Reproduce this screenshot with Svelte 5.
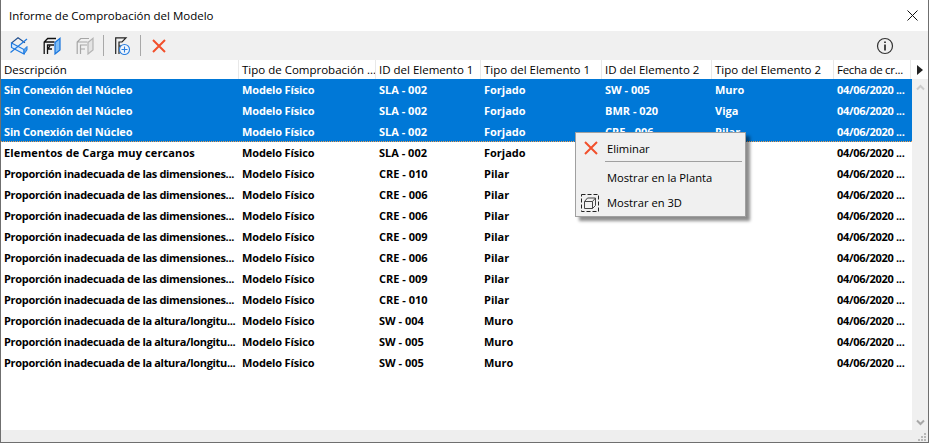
<script>
  const columns = ['Descripción', 'Tipo de Comprobación ...', 'ID del Elemento 1', 'Tipo del Elemento 1', 'ID del Elemento 2', 'Tipo del Elemento 2', 'Fecha de cr...'];
  const dims = 'Proporción inadecuada de las dimensiones...';
  const alt = 'Proporción inadecuada de la altura/longitu...';
  const nucleo = 'Sin Conexión del Núcleo';
  const rows = [
    [nucleo, 'SLA - 002', 'Forjado', 'SW - 005', 'Muro', true],
    [nucleo, 'SLA - 002', 'Forjado', 'BMR - 020', 'Viga', true],
    [nucleo, 'SLA - 002', 'Forjado', 'CRE - 006', 'Pilar', true],
    ['Elementos de Carga muy cercanos', 'SLA - 002', 'Forjado', '', ''],
    [dims, 'CRE - 010', 'Pilar', '', ''],
    [dims, 'CRE - 006', 'Pilar', '', ''],
    [dims, 'CRE - 006', 'Pilar', '', ''],
    [dims, 'CRE - 009', 'Pilar', '', ''],
    [dims, 'CRE - 006', 'Pilar', '', ''],
    [dims, 'CRE - 009', 'Pilar', '', ''],
    [dims, 'CRE - 010', 'Pilar', '', ''],
    [alt, 'SW - 004', 'Muro', '', ''],
    [alt, 'SW - 005', 'Muro', '', ''],
    [alt, 'SW - 005', 'Muro', '', '']
  ];
</script>

<div class="window">
  <header class="titlebar">
    <span class="title">Informe de Comprobación del Modelo</span>
    <svg class="close" width="11" height="11" viewBox="0 0 11 11"><path d="M.5.5l10 10M10.5.5l-10 10" stroke="#111" stroke-width="1" fill="none"/></svg>
  </header>

  <div class="toolbar">
    <svg class="tool" width="18" height="18" viewBox="0 0 18 18" fill="none">
      <path d="M1.500 6L8 .8l7 5" stroke="#23508f" stroke-width="1.100"/>
      <path d="M1.500 6v4.500L14 17v-4.500z" fill="#dcebfb" stroke="#1e7ae0" stroke-width="1.200"/>
      <path d="M14 12.500l3-3V13l-3 4z" fill="#5ba8f0" stroke="#1e7ae0"/>
      <path d="M.5 15.500L17 2" stroke="#1e7ae0" stroke-width="1.200"/>
    </svg>
    <svg class="tool" width="18" height="18" viewBox="0 0 18 18" fill="none">
      <path d="M1.200 17V5l3.500-3.500H13M1.200 5H11.500M4.500 17V8H11M4.500 12l2.500-3M4.500 12H9" stroke="#111" stroke-width="1.300"/>
      <path d="M12 5.500l5-4.200V13l-5 4z" fill="#7fbdf5" stroke="#1673dc" stroke-width="1.200"/>
    </svg>
    <svg class="tool" width="18" height="18" viewBox="0 0 18 18" fill="none">
      <path d="M1.200 17V5l3.500-3.500H13M1.200 5H11.500M4.500 17V8H11M4.500 12H9" stroke="#a6a6a6" stroke-width="1.200"/>
      <path d="M12 5.500l5-4.200V13l-5 4z" fill="#e4e4e4" stroke="#b4b4b4" stroke-width="1.200"/>
    </svg>
    <span class="divider"></span>
    <svg class="tool" width="18" height="18" viewBox="0 0 18 18" fill="none">
      <path d="M1.700 17V.8H12L8 5H5v12M5 9h3" stroke="#222" stroke-width="1.200"/>
      <circle cx="10.500" cy="12.500" r="5" fill="#f0f6fd" stroke="#2a7fe0" stroke-width="1.100"/>
      <path d="M10.500 9.500v6M7.500 12.500h6" stroke="#2a7fe0" stroke-width="1.100"/>
    </svg>
    <span class="divider second"></span>
    <svg class="tool" width="14" height="14" viewBox="0 0 14 14"><path d="M1 1l12 12M13 1L1 13" stroke="#f2502c" stroke-width="2" fill="none"/></svg>
    <svg class="info" width="18" height="18" viewBox="0 0 18 18" fill="none">
      <circle cx="9" cy="9" r="7.500" stroke="#333" stroke-width="1.200"/>
      <path d="M9 7.500V13.500" stroke="#333" stroke-width="1.800"/>
      <path d="M9 4.500v1.600" stroke="#333" stroke-width="1.800"/>
    </svg>
  </div>

  <div class="content">
    <div class="main">
      <div class="grid head">
        {#each columns as col}
          <span class="cell">{col}</span>
        {/each}
      </div>
      {#each rows as row, i}
        <div class="grid row" class:selected={row[5]} class:focus={i === 2}>
          <span class="cell" class:tight={i > 3} class:snug={i < 3} class:wide={i === 3}>{row[0]}</span>
          <span class="cell snug">Modelo Físico</span>
          <span class="cell">{row[1]}</span>
          <span class="cell">{row[2]}</span>
          <span class="cell">{row[3]}</span>
          <span class="cell">{row[4]}</span>
          <span class="cell date">04/06/2020 ...</span>
        </div>
      {/each}
    </div>
    <div class="vscroll">
      <div class="corner"><svg width="6" height="10" viewBox="0 0 6 10"><path d="M0 0l6 5-6 5z" fill="#222"/></svg></div>
      <div class="track">
        <svg width="9" height="7" viewBox="0 0 9 7" fill="none"><path d="M1 5.500l3.500-3.500L8 5.500" stroke="#ccc" stroke-width="2"/></svg>
        <svg width="9" height="7" viewBox="0 0 9 7" fill="none"><path d="M1 1.500L4.500 5 8 1.500" stroke="#a8a8a8" stroke-width="2"/></svg>
      </div>
    </div>
  </div>

  <div class="hscroll">
    <svg class="grip" width="9" height="9" viewBox="0 0 9 9"><path d="M6 0h2v2H6zM3 3h2v2H3zM6 3h2v2H6zM0 6h2v2H0zM3 6h2v2H3zM6 6h2v2H6z" fill="#b8b8b8"/></svg>
  </div>

  <div class="menu">
    <div class="item">
      <svg class="micon" width="14" height="14" viewBox="0 0 14 14"><path d="M1 1l12 12M13 1L1 13" stroke="#f2502c" stroke-width="2" fill="none"/></svg>
      <span>Eliminar</span>
    </div>
    <div class="sep"></div>
    <div class="item"><span>Mostrar en la Planta</span></div>
    <div class="item">
      <svg class="micon cube" width="18" height="18" viewBox="0 0 18 18" fill="none">
        <rect x=".5" y=".5" width="17" height="17" stroke="#222" stroke-dasharray="4 2"/>
        <path d="M3.500 7.500h8v7h-8zM3.500 7.500l3-3.500h8v7.500l-3 3M11.500 7.500l3-3.500" stroke="#444"/>
      </svg>
      <span>Mostrar en 3D</span>
    </div>
  </div>
</div>

<style>
  :global(body) {
    margin: 0;
    background: #fff;
  }
  .window {
    position: relative;
    width: 929px;
    height: 443px;
    box-sizing: border-box;
    border: 1px solid #6f6f6f;
    border-top: 0;
    display: flex;
    flex-direction: column;
    background: #fff;
    color: #000;
    font-family: "Open Sans", "Noto Sans", sans-serif;
    font-size: 11.500px;
    overflow: hidden;
  }
  .titlebar {
    height: 31px;
    flex: none;
    display: flex;
    align-items: center;
    justify-content: space-between;
    padding: 0 10px 0 8px;
  }
  .title {
    font-size: 11.500px;
  }
  .toolbar {
    height: 29px;
    flex: none;
    background: #f0f0f0;
    display: flex;
    align-items: center;
    padding-left: 9px;
  }
  .tool {
    margin-right: 15px;
    flex: none;
  }
  .divider {
    width: 1px;
    height: 21px;
    background: #a8a8a8;
    margin: 0 10px 0 -6px;
  }
  .divider.second {
    margin: 0 11px 0 -7px;
  }
  .info {
    margin-left: auto;
    margin-right: 34px;
  }
  .content {
    flex: 1;
    display: flex;
    min-height: 0;
  }
  .main {
    flex: 1;
    min-width: 0;
  }
  .grid {
    display: grid;
    grid-template-columns: 238px 137px 105px 121px 110px 122px 77px;
  }
  .head {
    height: 19px;
    align-items: center;
  }
  .head .cell {
    border-right: 1px solid #e8e8e8;
    height: 100%;
    line-height: 20px;
    box-sizing: border-box;
  }
  .head .cell:last-child {
    letter-spacing: -.3px;
  }
  .cell {
    padding-left: 3px;
    white-space: nowrap;
    overflow: hidden;
  }
  .tight {
    letter-spacing: -.32px;
  }
  .snug {
    letter-spacing: -.15px;
  }
  .wide {
    letter-spacing: .12px;
  }
  .date {
    letter-spacing: -.3px;
  }
  .row {
    height: 21px;
    line-height: 22px;
    font-size: 11px;
    font-weight: 700;
  }
  .row.selected {
    background: #0078d7;
    color: #fff;
  }
  .row.focus {
    border-bottom: 1px dotted #f0a050;
    box-sizing: border-box;
  }
  .vscroll {
    width: 16px;
    flex: none;
    display: flex;
    flex-direction: column;
    background: #f0f0f0;
  }
  .corner {
    height: 19px;
    background: #fff;
    display: flex;
    align-items: center;
    justify-content: center;
  }
  .track {
    flex: 1;
    display: flex;
    flex-direction: column;
    justify-content: space-between;
    align-items: center;
    padding: 5px 0 4px;
  }
  .hscroll {
    height: 12px;
    flex: none;
    background: #eeeeee;
    position: relative;
  }
  .grip {
    position: absolute;
    right: 1px;
    bottom: 0;
  }
  .menu {
    position: absolute;
    left: 574px;
    top: 132px;
    width: 171px;
    height: 85px;
    box-sizing: border-box;
    padding-top: 3px;
    background: #f0f0f0;
    border: 1px solid #a0a0a0;
    box-shadow: 4px 4px 3px rgba(0, 0, 0, .45);
    font-size: 11.200px;
  }
  .item {
    height: 25px;
    display: flex;
    align-items: center;
    position: relative;
    padding-left: 31px;
  }
  .sep {
    height: 1px;
    background: #a0a0a0;
    margin: 0 0 3px 29px;
    width: 137px;
  }
  .micon {
    position: absolute;
    left: 8px;
    top: 5px;
  }
  .micon.cube {
    left: 5px;
    top: 4px;
  }
</style>
